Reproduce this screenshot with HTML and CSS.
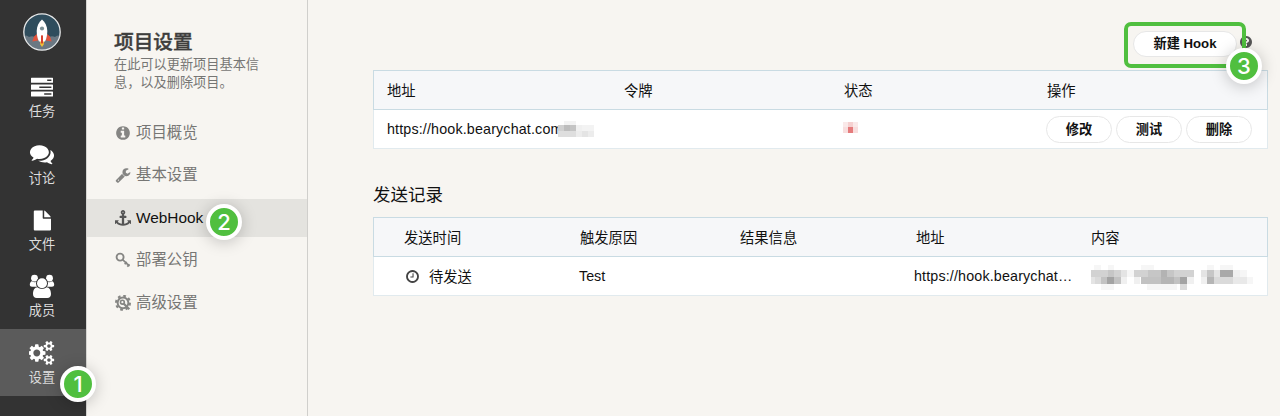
FILE: index.html
```html
<!DOCTYPE html>
<html lang="zh-CN">
<head>
<meta charset="utf-8">
<title>项目设置 - WebHook</title>
<link rel="stylesheet" href="styles.css">
</head>
<body>
<div class="app">
  <nav class="rail">
    <div class="brand">
      <svg class="logo" viewBox="0 0 38 38">
        <defs><clipPath id="disc"><circle cx="19" cy="19" r="18"/></clipPath></defs>
        <g clip-path="url(#disc)">
          <rect width="38" height="38" fill="#2f4d5d"/>
          <path d="M0 24q3-3 6 0 4-2 7 1h12q3-3 7-1 3-3 6 0v14H0z" fill="#6a7883"/>
        </g>
        <path d="M14.500 20.500l-3.500 3-1.700 5 5.700-1zM23.500 20.500l3.500 3 1.700 5-5.700-1z" fill="#e0533d"/>
        <path d="M17 28h4l-.3 3.500-1.700 2.500-1.700-2.500z" fill="#f4bf35"/>
        <path d="M19 6.500c3.200 2.800 5.300 7 5.300 11.500 0 4-.8 7.500-2.300 10.500h-6c-1.500-3-2.300-6.500-2.300-10.500C13.700 13.500 15.800 9.300 19 6.500z" fill="#fff"/>
        <circle cx="19" cy="15.500" r="2.100" fill="#7c9096"/>
        <path d="M18 23q1-2 2 0v7q-1 1.500-2 0z" fill="#d8402e"/>
        <circle cx="19" cy="19" r="18.200" fill="none" stroke="#e8eaeb" stroke-width="1.300"/>
      </svg>
    </div>
    <a class="rail-item rail-item-first">
      <svg class="rail-icon" viewBox="0 0 26 26">
        <path fill="#fff" fill-rule="evenodd" d="M2.500 3.700h21a.5.5 0 0 1 .5.5v4.100a.5.5 0 0 1-.5.5h-21a.5.5 0 0 1-.5-.5V4.200a.5.5 0 0 1 .5-.5zM18.200 5.500v1.500h4.200V5.500zM2.500 10.600h21a.5.5 0 0 1 .5.5v4.100a.5.5 0 0 1-.5.5h-21a.5.5 0 0 1-.5-.5v-4.100a.5.5 0 0 1 .5-.5zM10.300 12.400v1.500h12.100v-1.500zM2.500 17.500h21a.5.5 0 0 1 .5.5v4.100a.5.5 0 0 1-.5.5h-21a.5.5 0 0 1-.5-.5V18a.5.5 0 0 1 .5-.5zM15.200 19.300v1.500h7.200v-1.500z"/>
      </svg>
      <span>任务</span>
    </a>
    <a class="rail-item">
      <svg class="rail-icon" viewBox="-70 -60 1932 1932">
        <path fill="#fff" d="M1408 768q0 139-94 257t-256.500 186.500-353.500 68.500q-86 0-176-16-124 88-278 128-36 9-86 16h-3q-11 0-20.500-8t-11.500-21q-1-3-1-6.500t.5-6.500 2-6l2.500-5 3.500-5.500 4-5 4.500-5 4-4.500q5-6 23-25t26-29.500 22.500-29 25-38.500 20.500-44q-124-72-195-177t-71-224q0-139 94-257t256.500-186.500 353.500-68.500 353.500 68.500 256.500 186.500 94 257zm384 256q0 120-71 224.500t-195 176.500q10 24 20.500 44t25 38.500 22.500 29 26 29.500 23 25q1 1 4 4.500t4.500 5 4 5 3.500 5.500l2.500 5 2 6 .5 6.500-1 6.500q-3 14-13 22t-22 7q-50-7-86-16-154-40-278-128-90 16-176 16-271 0-472-132 58 4 88 4 161 0 309-45t264-129q125-92 192-212t67-254q0-77-23-152 129 71 204 178t75 230z"/>
      </svg>
      <span>讨论</span>
    </a>
    <a class="rail-item">
      <svg class="rail-icon" viewBox="0 0 26 26">
        <path fill="#fff" d="M5.800 3.400h7.900v7.300c0 .7.4 1.100 1.100 1.100h7.200v10.700a1 1 0 0 1-1 1H5.800a1 1 0 0 1-1-1V4.400a1 1 0 0 1 1-1zM15.200 3.500c.4.100.7.300 1 .6l4.900 5c.3.300.5.700.6 1.200h-6.500z"/>
      </svg>
      <span>文件</span>
    </a>
    <a class="rail-item">
      <svg class="rail-icon" viewBox="0 0 26 26">
        <g fill="#fff">
          <circle cx="5.500" cy="5.200" r="3.400"/><circle cx="20.500" cy="5.200" r="3.400"/>
          <path d="M3 8.300c1.500 1 3.800 1.200 5 .2 0 2 .8 4 2 5.200H3c-1.300 0-2.200-.6-2.200-1.900 0-1.600.8-3.500 2.200-3.500zM23 8.300c-1.500 1-3.800 1.200-5 .2 0 2-.8 4-2 5.200h7c1.300 0 2.200-.6 2.200-1.900 0-1.600-.8-3.500-2.200-3.500z"/>
          <circle cx="13" cy="10.300" r="6" fill="#333"/>
          <circle cx="13" cy="10.300" r="5"/>
          <path d="M8.500 14.300c2.500 2.200 6.500 2.200 9 0 3 0 4.500 3.300 4.500 6.700 0 2.500-1.500 4-3.700 4H7.700C5.500 25 4 23.500 4 21c0-3.400 1.500-6.700 4.500-6.700z"/>
        </g>
      </svg>
      <span>成员</span>
    </a>
    <a class="rail-item rail-item-active">
      <svg class="rail-icon" viewBox="0 0 1920 1792">
        <path fill="#fff" d="M832 896q0-106-75-181t-181-75-181 75-75 181 75 181 181 75 181-75 75-181zm768 512q0-52-38-90t-90-38-90 38-38 90q0 53 37.500 90.500t90.500 37.500 90.500-37.500 37.500-90.500zm0-1024q0-52-38-90t-90-38-90 38-38 90q0 53 37.500 90.500t90.500 37.500 90.500-37.500 37.500-90.500zm-384 421v185q0 10-7 19.500t-16 10.500l-155 24q-11 35-32 76 34 48 90 115 7 11 7 20 0 12-7 19-23 30-82.500 89.500t-78.500 59.500q-11 0-21-7l-115-90q-37 19-77 31-11 108-23 155-7 24-30 24h-186q-11 0-20-7.500t-10-17.500l-23-153q-34-10-75-31l-118 89q-7 7-20 7-11 0-21-8-144-133-144-160 0-9 7-19 10-14 41-53t47-61q-23-44-35-82l-152-24q-10-1-17-9.500t-7-19.500v-185q0-10 7-19.500t16-10.500l155-24q11-35 32-76-34-48-90-115-7-11-7-20 0-12 7-20 22-30 82-89t79-59q11 0 21 7l115 90q34-18 77-32 11-108 23-154 7-24 30-24h186q11 0 20 7.500t10 17.500l23 153q34 10 75 31l118-89q8-7 20-7 11 0 21 8 144 133 144 160 0 8-7 19-12 16-42 54t-45 60q23 48 34 82l152 23q10 2 17 10.500t7 19.500zm640 533v140q0 16-149 31-12 27-30 52 51 113 51 138 0 4-4 7-122 71-124 71-8 0-46-47t-52-68q-20 2-30 2t-30-2q-14 21-52 68t-46 47q-2 0-124-71-4-3-4-7 0-25 51-138-18-25-30-52-149-15-149-31v-140q0-16 149-31 13-29 30-52-51-113-51-138 0-4 4-7 4-2 35-20t59-34 30-16q8 0 46 46.500t52 67.500q20-2 30-2t30 2q51-71 92-112l6-2q4 0 124 70 4 3 4 7 0 25-51 138 17 23 30 52 149 15 149 31zm0-1024v140q0 16-149 31-12 27-30 52 51 113 51 138 0 4-4 7-122 71-124 71-8 0-46-47t-52-68q-20 2-30 2t-30-2q-14 21-52 68t-46 47q-2 0-124-71-4-3-4-7 0-25 51-138-18-25-30-52-149-15-149-31v-140q0-16 149-31 13-29 30-52-51-113-51-138 0-4 4-7 4-2 35-20t59-34 30-16q8 0 46 46.500t52 67.500q20-2 30-2t30 2q51-71 92-112l6-2q4 0 124 70 4 3 4 7 0 25-51 138 17 23 30 52 149 15 149 31z"/>
      </svg>
      <span>设置</span>
      <b class="step step-one">1</b>
    </a>
  </nav>

  <aside class="panel">
    <header class="panel-head">
      <h1>项目设置</h1>
      <p>在此可以更新项目基本信息，以及删除项目。</p>
    </header>
    <ul class="menu">
      <li class="menu-item">
        <svg class="menu-icon" viewBox="0 0 1792 1792"><path d="M1152 1376v-160q0-14-9-23t-23-9h-96v-512q0-14-9-23t-23-9h-320q-14 0-23 9t-9 23v160q0 14 9 23t23 9h96v320h-96q-14 0-23 9t-9 23v160q0 14 9 23t23 9h448q14 0 23-9t9-23zm-128-896v-160q0-14-9-23t-23-9h-192q-14 0-23 9t-9 23v160q0 14 9 23t23 9h192q14 0 23-9t9-23zm640 416q0 209-103 385.500t-279.500 279.500-385.500 103-385.500-103-279.500-279.500-103-385.500 103-385.500 279.500-279.500 385.500-103 385.500 103 279.500 279.500 103 385.500z"/></svg>
        <span>项目概览</span>
      </li>
      <li class="menu-item">
        <svg class="menu-icon" viewBox="0 0 1792 1792"><path d="M448 1472q0-26-19-45t-45-19-45 19-19 45 19 45 45 19 45-19 19-45zm644-420l-682 682q-37 37-90 37-52 0-91-37l-106-108q-38-36-38-90 0-53 38-91l681-681q39 98 114.500 173.500t173.500 114.500zm634-435q0 39-23 106-47 134-164.500 217.500t-258.500 83.500q-185 0-316.500-131.500t-131.500-316.500 131.500-316.500 316.500-131.500q58 0 121.500 16.500t107.500 46.500q16 11 16 28t-16 28l-293 169v224l193 107q5-3 79-48.500t135.500-81 70.500-35.500q15 0 23.500 10t8.500 25z"/></svg>
        <span>基本设置</span>
      </li>
      <li class="menu-item menu-item-active">
        <svg class="menu-icon" viewBox="0 0 1792 1792"><path d="M960 256q0-26-19-45t-45-19-45 19-19 45 19 45 45 19 45-19 19-45zm832 928v352q0 22-20 30-8 2-12 2-12 0-23-9l-93-93q-119 143-318.500 226.500t-429.500 83.500-429.500-83.500-318.500-226.500l-93 93q-9 9-23 9-4 0-12-2-20-8-20-30v-352q0-14 9-23t23-9h352q22 0 30 20 8 19-7 35l-100 100q67 91 189.500 153.500t271.500 82.500v-647h-192q-26 0-45-19t-19-45v-128q0-26 19-45t45-19h192v-163q-58-34-93-92.500t-35-128.500q0-106 75-181t181-75 181 75 75 181q0 70-35 128.500t-93 92.500v163h192q26 0 45 19t19 45v128q0 26-19 45t-45 19h-192v647q149-20 271.500-82.500t189.500-153.500l-100-100q-15-16-7-35 8-20 30-20h352q14 0 23 9t9 23z"/></svg>
        <span class="latin">WebHook</span>
        <b class="step step-two">2</b>
      </li>
      <li class="menu-item">
        <svg class="menu-icon" viewBox="0 0 16 16"><g fill="none" stroke="#858583" stroke-width="1.700"><circle cx="5.100" cy="5.100" r="3.500" stroke-width="1.900"/><path d="M7.600 7.600l6.900 6.500M9.700 12.200l2-2.300M12.300 14.600l2.100-2.400"/></g></svg>
        <span>部署公钥</span>
      </li>
      <li class="menu-item">
        <svg class="menu-icon" viewBox="0 0 16 16"><g fill="none" stroke="#858583"><circle cx="8" cy="7.800" r="5.400" stroke-width="2"/><circle cx="8" cy="7.800" r="7" stroke-width="2" stroke-dasharray="2.750 2.750"/><circle cx="7.400" cy="7.200" r="1.900" stroke-width="1.600"/><path d="M8.300 8.200l6 6" stroke-width="2.300"/></g></svg>
        <span>高级设置</span>
      </li>
    </ul>
  </aside>

  <main class="content">
    <div class="toolbar">
      <div class="highlight">
        <button class="btn btn-new">新建 Hook</button>
        <b class="step step-three">3</b>
      </div>
      <svg class="help" viewBox="0 0 1792 1792"><path d="M1024 1376v-192q0-14-9-23t-23-9h-192q-14 0-23 9t-9 23v192q0 14 9 23t23 9h192q14 0 23-9t9-23zm256-672q0-88-55.500-163t-138.500-116-170-41q-243 0-371 213-15 24 8 42l132 100q7 6 19 6 16 0 25-12 53-68 86-92 34-24 86-24 48 0 85.500 26t37.500 59q0 38-20 61t-68 45q-63 28-115.500 86.500t-52.500 125.500v36q0 14 9 23t23 9h192q14 0 23-9t9-23q0-19 21.500-49.500t54.500-49.500q32-18 49-28.500t46-35 44.500-48 28-60.500 12.500-81zm384 192q0 209-103 385.500t-279.500 279.500-385.500 103-385.500-103-279.500-279.500-103-385.500 103-385.500 279.500-279.500 385.500-103 385.500 103 279.500 279.500 103 385.500z"/></svg>
    </div>

    <section class="grid hooks">
      <div class="row row-head"><span>地址</span><span>令牌</span><span>状态</span><span>操作</span></div>
      <div class="row row-body">
        <span class="url"><span class="latin url-text">https://hook.bearychat.com</span><svg class="mask mask-url" viewBox="0 0 37 18" shape-rendering="crispEdges">
          <path fill="#fff" d="M0 0h37v18H0z"/><path fill="#f3f3f3" d="M6 1h12v4H6zM24 5h12v6H24z"/><path fill="#d0d0d0" d="M0 5h6v6H0z"/><path fill="#bdbdbd" d="M6 5h6v6H6z"/><path fill="#c4c4c4" d="M12 5h6v6h-6z"/><path fill="#f0f0f0" d="M18 5h6v6h-6z"/><path fill="#dedede" d="M0 11h18v6H0z"/><path fill="#ececec" d="M18 11h6v6h-6zM30 11h6v6h-6z"/><path fill="#e4e4e4" d="M24 11h6v6h-6z"/></svg></span>
        <span></span>
        <span class="state"><svg class="mask mask-state" viewBox="0 0 16 12" shape-rendering="crispEdges"><path fill="#fae9e9" d="M0 0h5v5H0zM10 0h5v5h-5z"/><path fill="#f5d0d0" d="M5 0h5v5H5z"/><path fill="#f8dede" d="M0 5h5v6H0zM10 5h5v6h-5z"/><path fill="#e57b7c" d="M5 5h5v6H5z"/></svg></span>
        <span class="actions"><button class="btn">修改</button><button class="btn">测试</button><button class="btn">删除</button></span>
      </div>
    </section>

    <h2>发送记录</h2>

    <section class="grid logs">
      <div class="row row-head"><span>发送时间</span><span>触发原因</span><span>结果信息</span><span>地址</span><span>内容</span></div>
      <div class="row row-body">
        <span class="time"><svg class="clock" viewBox="0 0 1792 1792"><path d="M1024 544v448q0 14-9 23t-23 9h-320q-14 0-23-9t-9-23v-64q0-14 9-23t23-9h224v-352q0-14 9-23t23-9h64q14 0 23 9t9 23zm416 352q0-148-73-273t-198-198-273-73-273 73-198 198-73 273 73 273 198 198 273 73 273-73 198-198 73-273zm224 0q0 209-103 385.500t-279.500 279.500-385.500 103-385.500-103-279.500-279.500-103-385.500 103-385.500 279.500-279.500 385.500-103 385.500 103 279.500 279.500 103 385.500z"/></svg><span class="pending">待发送</span></span>
        <span class="latin reason">Test</span>
        <span></span>
        <span class="latin link">https://hook.bearychat…</span>
        <span class="payload"><svg class="mask mask-payload" viewBox="0 0 166 26" shape-rendering="crispEdges">
          <path fill="#f6f6f6" d="M3 0h7v5H3zM17 0h6v5h-6zM50 0h13v5H50zM116 0h7v5h-7zM129 0h13v5h-13zM36 5h7v7h-7zM149 5h7v7h-7zM156 12h6v7h-6zM10 19h13v6H10zM56 19h30v6H56z"/>
          <path fill="#d2d2d2" d="M0 5h17v7H0zM23 5h7v7h-7zM50 5h7v7h-7zM83 5h20v7H83zM30 12h0zM43 5h7v7h-7z"/>
          <path fill="#c6c6c6" d="M17 5h6v7h-6zM57 5h13v7H57zM76 5h7v7h-7zM116 5h7v7h-7z"/>
          <path fill="#b3b3b3" d="M70 5h6v7h-6z"/>
          <path fill="#e4e4e4" d="M30 5h6v7h-6zM110 5h6v7h-6zM123 5h6v7h-6zM0 12h4v7H0z"/>
          <path fill="#a9a9a9" d="M129 5h13v7h-13z"/>
          <path fill="#f0f0f0" d="M30 12h6v7h-6zM43 12h6v7h-6zM96 12h7v7h-7zM110 12h6v7h-6zM142 5h7v7h-7z"/>
          <path fill="#c2c2c2" d="M10 12h6v7h-6zM23 12h7v7h-7zM50 12h20v7H50zM83 12h6v7h-6z"/>
          <path fill="#b5b5b5" d="M70 12h13v7H70zM116 12h7v7h-7z"/>
          <path fill="#a3a3a3" d="M16 12h7v7h-7zM89 12h7v7h-7z"/>
          <path fill="#dadada" d="M4 12h6v7H4zM123 12h19v7h-19zM89 19h7v6h-7z"/>
          <path fill="#e9e9e9" d="M142 12h14v7h-14z"/>
        </svg></span>
      </div>
    </section>
  </main>
</div>
</body>
</html>
```
FILE: styles.css
```css
* { box-sizing: border-box; }

body {
  margin: 0;
  background: #f7f5f1;
  color: #111;
  font: 14.3px/20px "Liberation Sans", "Noto Sans CJK SC", sans-serif;
}

h1, h2, p, ul { margin: 0; padding: 0; }
svg { display: block; }
.latin { white-space: nowrap; }

.app { display: flex; height: 416px; overflow: hidden; }

/* Main navigation */
.rail { flex: none; width: 86px; background: #333; color: #ddd; }
.brand { height: 65px; padding: 13px 0 0 23px; }
.logo { width: 38px; height: 38px; }
.rail-item {
  position: relative;
  display: flex;
  flex-direction: column;
  align-items: center;
  height: 66px;
  padding: 10px 2px 0 0;
  font-size: 13.2px;
}
.rail-item-first { padding-top: 9px; }
.rail-icon { width: 26px; height: 26px; margin-bottom: 2px; }
.rail-item-active { height: 67px; padding-top: 11px; background: #5b5b5b; }

/* Settings menu */
.panel {
  flex: none;
  width: 222px;
  border-left: 1px solid #d6d5d2;
  border-right: 1px solid #d0cfcc;
}
.panel-head { height: 114px; padding: 29px 30px 0 27px; color: #767674; }
.panel-head h1 {
  height: 27px;
  font-size: 19.7px;
  line-height: 26px;
  font-weight: 500;
  color: #3e3e3d;
  -webkit-text-stroke: .4px #3e3e3d;
}
.panel-head p { font-size: 13.2px; line-height: 18px; }
.menu { display: flex; flex-direction: column; gap: 5px; list-style: none; }
.menu-item {
  position: relative;
  display: flex;
  align-items: center;
  height: 37.5px;
  padding-left: 28px;
  gap: 5px;
  font-size: 15.4px;
  color: #767674;
}
.menu-icon { width: 16px; height: 16px; fill: #858583; }
.menu-item-active { background: #e4e3df; color: #111; }
.menu-item-active .menu-icon { fill: #555; }

/* Numbered callouts */
.step {
  position: absolute;
  z-index: 2;
  width: 36px;
  height: 36px;
  border: 4px solid #fff;
  border-radius: 50%;
  background: #50bf3f;
  color: #fff;
  font: 500 22px/28px Inter, sans-serif;
  text-align: center;
  box-shadow: 0 2px 16px rgba(0, 0, 0, .22);
}
.step-one { left: 60px; top: 37px; }
.step-two { left: 119px; top: 5px; }
.step-three { right: -20px; bottom: -20px; }

/* Content */
.content { flex: 1; padding: 22px 12px 0 65px; }
.toolbar { display: flex; justify-content: flex-end; height: 48px; padding-right: 15px; }
.highlight {
  position: relative;
  z-index: 1;
  width: 122px;
  height: 46px;
  padding: 5px 5px 0;
  border: 4px solid #50bf3f;
  border-radius: 7px;
}
.help { width: 14px; height: 14px; margin: 13px 0 0 -7px; fill: #555; }

.btn {
  width: 66px;
  height: 27px;
  padding: 1px 0 0;
  border: 1px solid #e7e7e7;
  border-radius: 14px;
  background: #fff;
  color: #111;
  font: bold 13.2px/24px "Liberation Sans", "Noto Sans CJK SC", sans-serif;
}
.btn-new { display: block; width: 104px; height: 26px; padding: 0; }

.grid { width: 895px; }
.row { display: grid; align-items: center; height: 40px; }
.row-head { padding-top: 2px; background: #f6f7f9; border: 1px solid #c9dbe3; }
.row-body { height: 39px; background: #fff; border: 1px solid #e1eaee; border-top: 0; }
.hooks .row { grid-template-columns: 237px 220px 203px 1fr; padding-left: 13px; }
.logs .row { grid-template-columns: 176px 160px 176px 175px 1fr; padding-left: 30px; }

.url { display: flex; position: relative; }
.url-text, .link { letter-spacing: .15px; }
.mask-url { position: absolute; left: 171px; top: 1px; width: 37px; height: 18px; }
.mask-state { width: 16px; height: 12px; margin: 0 0 3px -1px; }
.mask-payload { width: 166px; height: 26px; margin-top: 3px; }
.actions { display: flex; gap: 4px; margin-left: -1px; }

h2 { height: 68px; padding-top: 33px; font-size: 17.5px; line-height: 26px; font-weight: 400; }

.time { display: flex; align-items: center; gap: 9px; }
.pending { padding-top: 2px; }
.clock { width: 15px; height: 15px; margin-left: 1px; fill: #444; }
.reason { margin-left: -1px; }
.link { margin-left: -2px; }
```
